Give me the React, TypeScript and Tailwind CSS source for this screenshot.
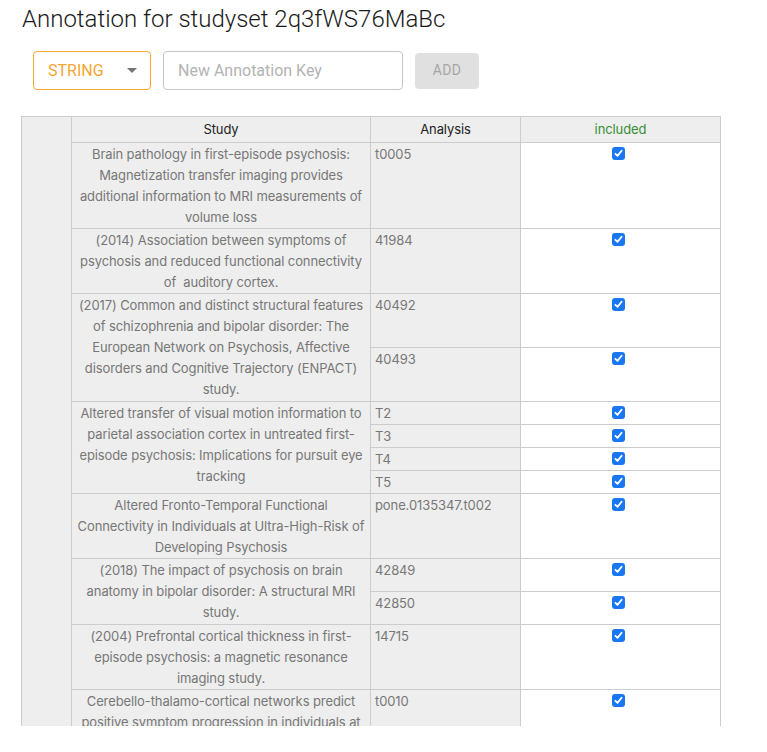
import React from "react";

interface Analysis {
  name: string;
  height: number;
}

interface StudyRow {
  lines: string[];
  analyses: Analysis[];
}

const rows: StudyRow[] = [
  {
    lines: [
      "Brain pathology in first-episode psychosis:",
      "Magnetization transfer imaging provides",
      "additional information to MRI measurements of",
      "volume loss",
    ],
    analyses: [{ name: "t0005", height: 86 }],
  },
  {
    lines: [
      "(2014) Association between symptoms of",
      "psychosis and reduced functional connectivity",
      "of  auditory cortex.",
    ],
    analyses: [{ name: "41984", height: 65 }],
  },
  {
    lines: [
      "(2017) Common and distinct structural features",
      "of schizophrenia and bipolar disorder: The",
      "European Network on Psychosis, Affective",
      "disorders and Cognitive Trajectory (ENPACT)",
      "study.",
    ],
    analyses: [
      { name: "40492", height: 54 },
      { name: "40493", height: 54 },
    ],
  },
  {
    lines: [
      "Altered transfer of visual motion information to",
      "parietal association cortex in untreated first-",
      "episode psychosis: Implications for pursuit eye",
      "tracking",
    ],
    analyses: [
      { name: "T2", height: 23 },
      { name: "T3", height: 23 },
      { name: "T4", height: 23 },
      { name: "T5", height: 23 },
    ],
  },
  {
    lines: [
      "Altered Fronto-Temporal Functional",
      "Connectivity in Individuals at Ultra-High-Risk of",
      "Developing Psychosis",
    ],
    analyses: [{ name: "pone.0135347.t002", height: 65 }],
  },
  {
    lines: [
      "(2018) The impact of psychosis on brain",
      "anatomy in bipolar disorder: A structural MRI",
      "study.",
    ],
    analyses: [
      { name: "42849", height: 33 },
      { name: "42850", height: 33 },
    ],
  },
  {
    lines: [
      "(2004) Prefrontal cortical thickness in first-",
      "episode psychosis: a magnetic resonance",
      "imaging study.",
    ],
    analyses: [{ name: "14715", height: 65 }],
  },
  {
    lines: [
      "Cerebello-thalamo-cortical networks predict",
      "positive symptom progression in individuals at",
      "ultra-high risk for psychosis",
    ],
    analyses: [{ name: "t0010", height: 86 }],
  },
];

function CheckedBox() {
  return (
    <span className="flex h-[13px] w-[13px] items-center justify-center rounded-[3px] bg-[#1a77f2]">
      <svg width="9" height="9" viewBox="0 0 9 9" fill="none">
        <path
          d="M1.4 4.8 L3.5 6.9 L7.6 1.8"
          stroke="white"
          strokeWidth="1.8"
          strokeLinecap="round"
          strokeLinejoin="round"
        />
      </svg>
    </span>
  );
}

export default function App() {
  return (
    <div className="min-h-screen bg-white px-[21px]">
      <h1 className="ml-[1px] pt-[3px] font-['Roboto',sans-serif] text-[24px] font-light leading-[32px] text-[#1a1a1a]">
        Annotation for studyset 2q3fWS76MaBc
      </h1>

      {/* controls */}
      <div className="ml-[12px] mt-[16px] flex items-center gap-3 font-['Roboto',sans-serif]">
        <div className="flex h-[39px] w-[118px] items-center justify-between rounded-[4px] border border-[#f5a532] pl-[14px] pr-[13px]">
          <span className="text-[16px] uppercase text-[#f5a532]">String</span>
          <svg width="10" height="5" viewBox="0 0 10 5">
            <path d="M0 0 L10 0 L5 5 Z" fill="#757575" />
          </svg>
        </div>
        <div className="flex h-[39px] w-[240px] items-center rounded-[4px] border border-[#c4c4c4] pl-[14px]">
          <span className="text-[16px] text-[#b3b3b3]">New Annotation Key</span>
        </div>
        <button className="h-[36px] w-[64px] rounded-[4px] bg-[#e0e0e0] text-[14px] tracking-[0.4px] text-[#a6a6a6]">
          ADD
        </button>
      </div>

      {/* table */}
      <div className="mt-[26px] flex h-[610px] w-[700px] overflow-hidden border-l border-t border-[#cccccc] font-['Inter',sans-serif] text-[13px] leading-[21px] tracking-[-0.1px]">
        <div className="w-[50px] shrink-0 border-r border-[#cccccc] bg-[#eeeeee]" />
        <div className="flex flex-col">
          <div className="flex h-[26px] shrink-0 bg-[#eeeeee] text-[#222222]">
            <div className="flex w-[299px] items-center justify-center border-b border-r border-[#cccccc]">
              Study
            </div>
            <div className="flex w-[150px] items-center justify-center border-b border-r border-[#cccccc]">
              Analysis
            </div>
            <div className="flex w-[200px] items-center justify-center border-b border-r border-[#cccccc] text-[#3a8d35]">
              included
            </div>
          </div>

          {rows.map((row, i) => (
            <div key={i} className="flex shrink-0">
              <div className="w-[299px] shrink-0 border-b border-r border-[#cccccc] bg-[#eeeeee] px-[4px] pt-[1px] text-center text-[#777777]">
                {row.lines.map((line, j) => (
                  <div key={j} className="whitespace-pre">
                    {line}
                  </div>
                ))}
              </div>
              <div className="flex flex-col">
                {row.analyses.map((a) => (
                  <div key={a.name} className="flex shrink-0" style={{ height: a.height }}>
                    <div className="w-[150px] border-b border-r border-[#cccccc] bg-[#eeeeee] pl-[4px] pt-[1px] text-[#777777]">
                      {a.name}
                    </div>
                    <div className="w-[200px] border-b border-r border-[#cccccc] bg-white pl-[91px] pt-[4px]">
                      <CheckedBox />
                    </div>
                  </div>
                ))}
              </div>
            </div>
          ))}
        </div>
      </div>
    </div>
  );
}
